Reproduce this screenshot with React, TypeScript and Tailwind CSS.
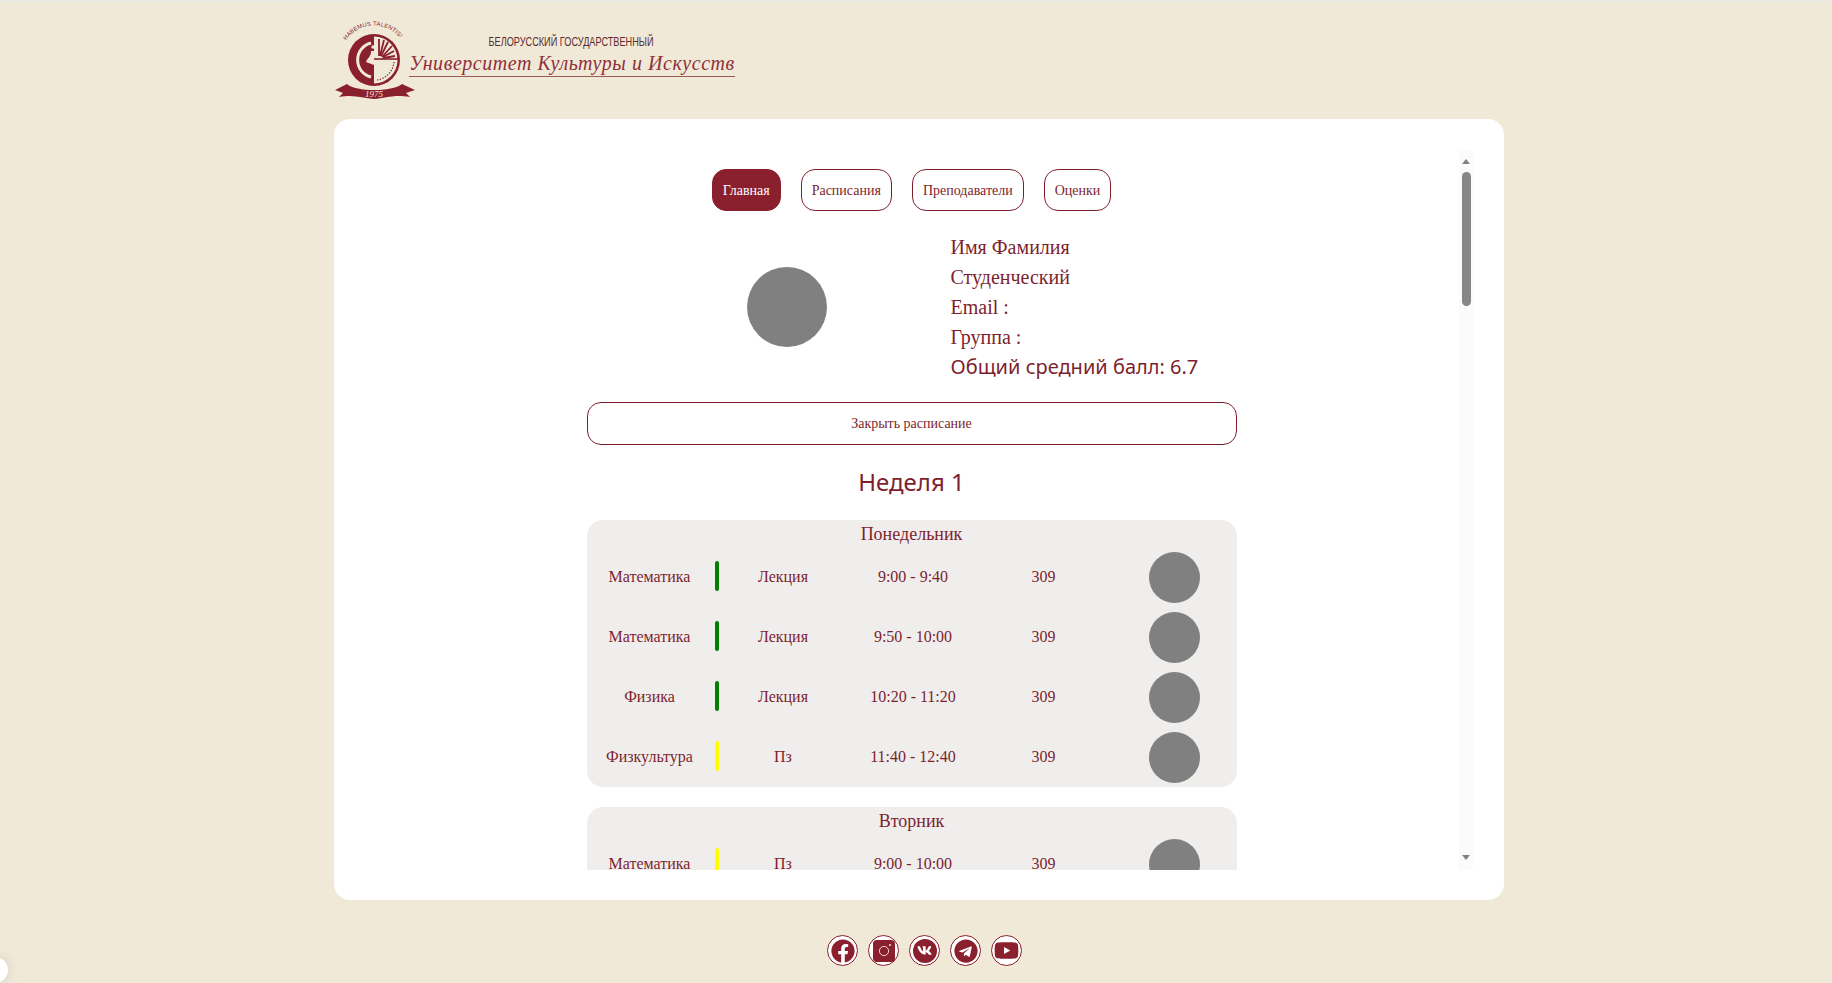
import { FaFacebook, FaTelegram, FaVk, FaYoutube } from 'react-icons/fa';

const days = [
  {
    name: 'Понедельник',
    lessons: [
      { subject: 'Математика', type: 'Лекция', time: '9:00 - 9:40', room: '309', bar: 'bg-[#008000]' },
      { subject: 'Математика', type: 'Лекция', time: '9:50 - 10:00', room: '309', bar: 'bg-[#008000]' },
      { subject: 'Физика', type: 'Лекция', time: '10:20 - 11:20', room: '309', bar: 'bg-[#008000]' },
      { subject: 'Физкультура', type: 'Пз', time: '11:40 - 12:40', room: '309', bar: 'bg-[#ffff00]' },
    ],
  },
  {
    name: 'Вторник',
    lessons: [{ subject: 'Математика', type: 'Пз', time: '9:00 - 10:00', room: '309', bar: 'bg-[#ffff00]' }],
  },
];

const tabs = ['Главная', 'Расписания', 'Преподаватели', 'Оценки'];
const profile = ['Имя Фамилия', 'Студенческий', 'Email :', 'Группа :'];

const Emblem = () => (
  <svg width="82" height="82" viewBox="0 0 82 82" className="shrink-0">
    <defs>
      <path id="motto" d="M12 20.3 A34 34 0 0 1 68 20.3" fill="none" />
    </defs>
    <text fontFamily="'Liberation Sans', sans-serif" fontSize="5.8" letterSpacing="0.2" fill="#8a1f2e">
      <textPath href="#motto">HABEMUS TALENTIS!</textPath>
    </text>
    <circle cx="40" cy="40" r="26" fill="#8a1f2e" />
    <path d="M40 16.5 A23.5 23.5 0 0 1 40 63.5 Z" fill="#f1e9d8" />
    <path d="M40 39 H64" stroke="#8a1f2e" strokeWidth="1.6" />
    <g stroke="#8a1f2e" strokeWidth="1.8">
      <path d="M45 36 L45 19" />
      <path d="M46 36 L50 20" />
      <path d="M47 36 L54 22" />
      <path d="M48 37 L58 26" />
      <path d="M49 37 L60 31" />
      <path d="M49 38 L61 36" />
    </g>
    <path d="M43 60 A20 20 0 0 0 60 42" stroke="#8a1f2e" strokeWidth="1.2" strokeDasharray="1.4 1.4" fill="none" />
    <path d="M37 23 A17.5 17.5 0 0 0 37 57" stroke="#f1e9d8" strokeWidth="3" fill="none" />
    <circle cx="39" cy="27" r="1.7" fill="#f1e9d8" />
    <path d="M37 31 H40 V45 L32 42 C34 37 37 37 37 31 Z" fill="#f1e9d8" />
    <path d="M1 70 L13 64 C22 72 58 72 68 64 L81 70 L72 73 L76 77 C60 74 52 78 40 79 C28 78 20 74 5 77 L9 73 Z" fill="#8a1f2e" />
    <text x="40" y="77" textAnchor="middle" fontFamily="'Liberation Serif', serif" fontStyle="italic" fontSize="9" fill="#f1e9d8">
      1975
    </text>
  </svg>
);

const Logo = () => (
  <div className="flex h-[117px] items-start pt-[18px]">
    <Emblem />
    <div className="mt-[11px] ml-[-7px] flex w-[326px] flex-col items-center">
      <span className="ml-[-2px] scale-x-[0.705] font-['Liberation_Sans',sans-serif] text-[13px] leading-[22px] whitespace-nowrap text-[#5a2a2c]">
        БЕЛОРУССКИЙ ГОСУДАРСТВЕННЫЙ
      </span>
      <span className="w-full border-b border-[#9a5a58] pb-[3px] text-center font-['Liberation_Serif',serif] text-[20px] leading-[20px] tracking-[0.55px] whitespace-nowrap text-[#8f3038] italic">
        Университет Культуры и Искусств
      </span>
    </div>
  </div>
);

const Scrollbar = () => (
  <div className="flex h-[720px] w-[14px] shrink-0 flex-col items-center bg-[#fbfbfb]">
    <div className="mt-[9px] h-0 w-0 border-x-[4.5px] border-b-[5px] border-x-transparent border-b-[#808080]" />
    <div className="mt-[8px] h-[134px] w-[9px] rounded-full bg-[#868686]" />
    <div className="mt-auto mb-[10px] h-0 w-0 border-x-[4.5px] border-t-[5px] border-x-transparent border-t-[#808080]" />
  </div>
);

const Instagram = () => (
  <svg width="24" height="24" viewBox="0 0 24 24">
    <rect x="1" y="1" width="22" height="22" rx="4" fill="#8a1f2e" />
    <circle cx="12" cy="12" r="4.6" fill="none" stroke="#f1e9d8" strokeWidth="0.9" />
    <circle cx="18" cy="6" r="1" fill="#f1e9d8" />
  </svg>
);

const Social = ({ children }: { children: React.ReactNode }) => (
  <div className="flex h-[31px] w-[31px] items-center justify-center rounded-full border border-[#8a1f2e] bg-white text-[#8a1f2e]">
    {children}
  </div>
);

export default function App() {
  return (
    <div className="relative h-[983px] overflow-hidden bg-[#f1e9d8] font-['Liberation_Serif',serif] text-[#7d1f2e]">
      <div className="h-[2px] bg-[#ecebe3]" />
      <div className="ml-[334px] w-[1170px]">
        <Logo />
        <main className="flex h-[781px] items-start rounded-[16px] bg-white pt-[31px] pr-[31px] pl-[30px]">
          <div className="h-[720px] flex-1 overflow-hidden pt-[19px]">
            <nav className="flex justify-center gap-[20px]">
              {tabs.map((tab, i) => (
                <button
                  key={tab}
                  className={`h-[42px] rounded-[14px] border border-[#7d1f2e] px-[10px] text-[14px] ${i === 0 ? 'border-[#8a1f2e] bg-[#8a1f2e] text-white' : 'bg-white'}`}
                >
                  {tab}
                </button>
              ))}
            </nav>

            <section className="mx-auto mt-[21px] flex w-[650px] items-center pl-[160px]">
              <div className="h-[80px] w-[80px] rounded-full bg-[#808080]" />
              <div className="ml-[124px] text-[20px] leading-[30px]">
                {profile.map((line) => (
                  <div key={line}>{line}</div>
                ))}
                <div className="font-['Noto_Sans',sans-serif]">Общий средний балл: 6.7</div>
              </div>
            </section>

            <button className="mx-auto mt-[20px] block h-[43px] w-[650px] rounded-[14px] border border-[#7d1f2e] bg-white text-[14px]">
              Закрыть расписание
            </button>

            <h2 className="mt-[21px] text-center font-['Noto_Sans',sans-serif] text-[24px] leading-[32px]">Неделя 1</h2>

            <div className="mx-auto mt-[22px] flex w-[650px] flex-col gap-[20px]">
              {days.map((day) => (
                <div key={day.name} className="rounded-[16px] bg-[#f0eeed]">
                  <div className="pt-[1px] text-center text-[18px] leading-[26px]">{day.name}</div>
                  {day.lessons.map((lesson, i) => (
                    <div key={i} className="grid h-[60px] grid-cols-5 items-center text-center text-[16px]">
                      <div className="relative pr-[4px]">
                        {lesson.subject}
                        <div className={`absolute top-[-4px] right-[-2px] h-[30px] w-[4px] rounded-full ${lesson.bar}`} />
                      </div>
                      <div className="pl-[3px]">{lesson.type}</div>
                      <div className="pl-[3px]">{lesson.time}</div>
                      <div className="pl-[4px]">{lesson.room}</div>
                      <div className="flex justify-center pl-[6px]">
                        <div className="h-[51px] w-[51px] rounded-full bg-[#808080]" />
                      </div>
                    </div>
                  ))}
                </div>
              ))}
            </div>
          </div>
          <Scrollbar />
        </main>
      </div>

      <footer className="mt-[35px] flex justify-center gap-[10px] pl-[17px]">
        <Social><FaFacebook size={24} /></Social>
        <Social><Instagram /></Social>
        <Social>
          <div className="flex h-[24px] w-[24px] items-center justify-center rounded-full bg-[#8a1f2e] text-white">
            <FaVk size={15} />
          </div>
        </Social>
        <Social><FaTelegram size={24} /></Social>
        <Social><FaYoutube size={25} /></Social>
      </footer>

      <div className="absolute top-[957px] left-[-18px] h-[26px] w-[26px] rounded-full bg-white shadow-[0_0_12px_rgba(0,0,0,0.12)]" />
    </div>
  );
}
